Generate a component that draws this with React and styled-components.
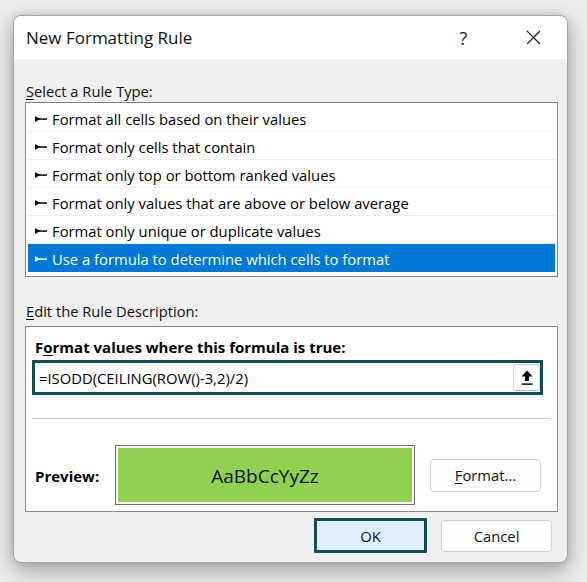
import React from "react";
import styled, { createGlobalStyle } from "styled-components";

const Global = createGlobalStyle`
  html, body { margin: 0; padding: 0; }
  body {
    background: #ececec;
    font-family: "Open Sans", "Noto Sans", sans-serif;
    color: #000;
    width: 587px;
    height: 582px;
    overflow: hidden;
  }
  * { box-sizing: border-box; }
`;

const Page = styled.div`
  padding: 15px 0 0 13px;
`;

const Dialog = styled.div`
  width: 555px;
  height: 548px;
  border: 1px solid #a3a3a3;
  border-radius: 8px;
  overflow: hidden;
  background: #f0f0f0;
  display: flex;
  flex-direction: column;
  box-shadow: 0 8px 22px rgba(0, 0, 0, 0.3), 0 0 8px rgba(0, 0, 0, 0.12);
`;

const TitleBar = styled.div`
  height: 43px;
  flex: none;
  background: #fff;
  display: flex;
  align-items: center;
  padding-left: 12px;
`;

const Title = styled.div`
  flex: 1;
  font-size: 17px;
  color: #111;
`;

const TitleButton = styled.div`
  width: ${(p) => p.$w}px;
  height: 100%;
  display: flex;
  align-items: center;
  justify-content: center;
  font-size: 18px;
  color: #222;
`;

const Body = styled.div`
  flex: 1;
  display: flex;
  flex-direction: column;
  padding: 22px 9px 10px 11px;
`;

const Label = styled.div`
  font-size: 14.7px;
  line-height: 20px;
  height: 20px;
  padding-left: 1px;
  color: #111;
  margin-top: ${(p) => p.$mt || 0}px;
  margin-bottom: ${(p) => p.$mb || 0}px;
  u { text-decoration-thickness: 1px; text-underline-offset: 2px; }
`;

const List = styled.div`
  height: 175px;
  border: 1px solid #858585;
  background: #fff;
  padding: 1px 2px 4px 2px;
  display: flex;
  flex-direction: column;
`;

const Row = styled.div`
  height: 28px;
  flex: none;
  display: flex;
  align-items: center;
  padding: 3px 0 0 7px;
  gap: 5px;
  font-size: 14.8px;
  border-bottom: 1px solid ${(p) => (p.$selected ? "#0078d7" : "#efefef")};
  background: ${(p) => (p.$selected ? "#0078d7" : "#fff")};
  color: ${(p) => (p.$selected ? "#fff" : "#000")};
`;

const Panel = styled.div`
  height: 186px;
  border: 1px solid #8a8a8a;
  background: #fff;
  padding: 10px 0 6px 6px;
  display: flex;
  flex-direction: column;
`;

const BoldLabel = styled.div`
  font-size: 15px;
  font-weight: 700;
  line-height: 20px;
  height: 20px;
  margin-left: 3px;
  u { text-decoration-thickness: 1px; text-underline-offset: 2px; }
`;

const FormulaBox = styled.div`
  height: 35px;
  margin: 3px 14px 0 0;
  border: 3px solid #0f4e57;
  display: flex;
  align-items: center;
  padding: 0 0 0 4px;
  background: #fff;
`;

const FormulaText = styled.div`
  flex: 1;
  font-size: 14.8px;
  color: #000;
  padding-top: 1px;
`;

const RefButton = styled.div`
  width: 27px;
  height: 27px;
  border: 1px solid #d5d5d5;
  border-bottom-color: #b8b8b8;
  border-radius: 3px;
  background: #fdfdfd;
  display: flex;
  align-items: center;
  justify-content: center;
`;

const Separator = styled.div`
  height: 1px;
  background: #cdcdcd;
  margin: 23px 7px 0 0;
`;

const PreviewRow = styled.div`
  display: flex;
  align-items: center;
  margin-top: 26px;
  padding-left: 3px;
`;

const PreviewLabel = styled.div`
  width: 80px;
  font-size: 15px;
  font-weight: 700;
  padding-top: 2px;
`;

const PreviewBox = styled.div`
  width: 300px;
  height: 60px;
  border: 1px solid #6e6e6e;
  padding: 2px;
  background: #fff;
`;

const PreviewFill = styled.div`
  width: 100%;
  height: 100%;
  background: #92d050;
  display: flex;
  align-items: center;
  justify-content: center;
  font-size: 19px;
  color: #111;
  padding-top: 1px;
`;

const Button = styled.div`
  width: ${(p) => p.$w}px;
  height: ${(p) => p.$h}px;
  margin-left: ${(p) => p.$ml || 0}px;
  border: ${(p) => (p.$default ? "3px solid #0f4e57" : "1px solid #d0d0d0")};
  border-radius: ${(p) => (p.$default ? "1px" : "4px")};
  background: ${(p) => (p.$default ? "#e0eef9" : "#fdfdfd")};
  display: flex;
  align-items: center;
  justify-content: center;
  font-size: 14.8px;
  color: #111;
  u { text-decoration-thickness: 1px; text-underline-offset: 2px; }
`;

const Footer = styled.div`
  display: flex;
  justify-content: flex-end;
  align-items: center;
  gap: 14px;
  margin-top: 6px;
  padding-right: 6px;
  height: 35px;
`;

const RowArrow = ({ color }) => (
  <svg width="12" height="8" viewBox="0 0 12 8">
    <polygon points="0,1 5,4 0,7" fill={color} />
    <rect x="3" y="3.3" width="9" height="1.5" fill={color} />
  </svg>
);

const UpArrow = () => (
  <svg width="12" height="16" viewBox="0 0 12 16">
    <polygon points="6,0.5 11.5,6.5 8,6.5 8,11 4,11 4,6.5 0.5,6.5" fill="#000" />
    <rect x="0.5" y="13.4" width="11" height="1.4" fill="#000" />
  </svg>
);

const CloseIcon = () => (
  <svg width="15" height="15" viewBox="0 0 15 15">
    <path d="M1 1 L14 14 M14 1 L1 14" stroke="#1a1a1a" strokeWidth="1.1" />
  </svg>
);

const rules = [
  "Format all cells based on their values",
  "Format only cells that contain",
  "Format only top or bottom ranked values",
  "Format only values that are above or below average",
  "Format only unique or duplicate values",
  "Use a formula to determine which cells to format",
];

export default function App() {
  return (
    <>
      <Global />
      <Page>
        <Dialog>
          <TitleBar>
            <Title>New Formatting Rule</Title>
            <TitleButton $w={73}>?</TitleButton>
            <TitleButton $w={67}>
              <CloseIcon />
            </TitleButton>
          </TitleBar>
          <Body>
            <Label $mb={1}>
              <u>S</u>elect a Rule Type:
            </Label>
            <List>
              {rules.map((r, i) => {
                const sel = i === rules.length - 1;
                return (
                  <Row key={r} $selected={sel}>
                    <RowArrow color={sel ? "#fff" : "#000"} />
                    {r}
                  </Row>
                );
              })}
            </List>
            <Label $mt={24} $mb={5}>
              <u>E</u>dit the Rule Description:
            </Label>
            <Panel>
              <BoldLabel>
                F<u>o</u>rmat values where this formula is true:
              </BoldLabel>
              <FormulaBox>
                <FormulaText>=ISODD(CEILING(ROW()-3,2)/2)</FormulaText>
                <RefButton>
                  <UpArrow />
                </RefButton>
              </FormulaBox>
              <Separator />
              <PreviewRow>
                <PreviewLabel>Preview:</PreviewLabel>
                <PreviewBox>
                  <PreviewFill>AaBbCcYyZz</PreviewFill>
                </PreviewBox>
                <Button $w={111} $h={33} $ml={15}>
                  <u>F</u>ormat...
                </Button>
              </PreviewRow>
            </Panel>
            <Footer>
              <Button $w={113} $h={35} $default>
                OK
              </Button>
              <Button $w={111} $h={32}>
                Cancel
              </Button>
            </Footer>
          </Body>
        </Dialog>
      </Page>
    </>
  );
}
